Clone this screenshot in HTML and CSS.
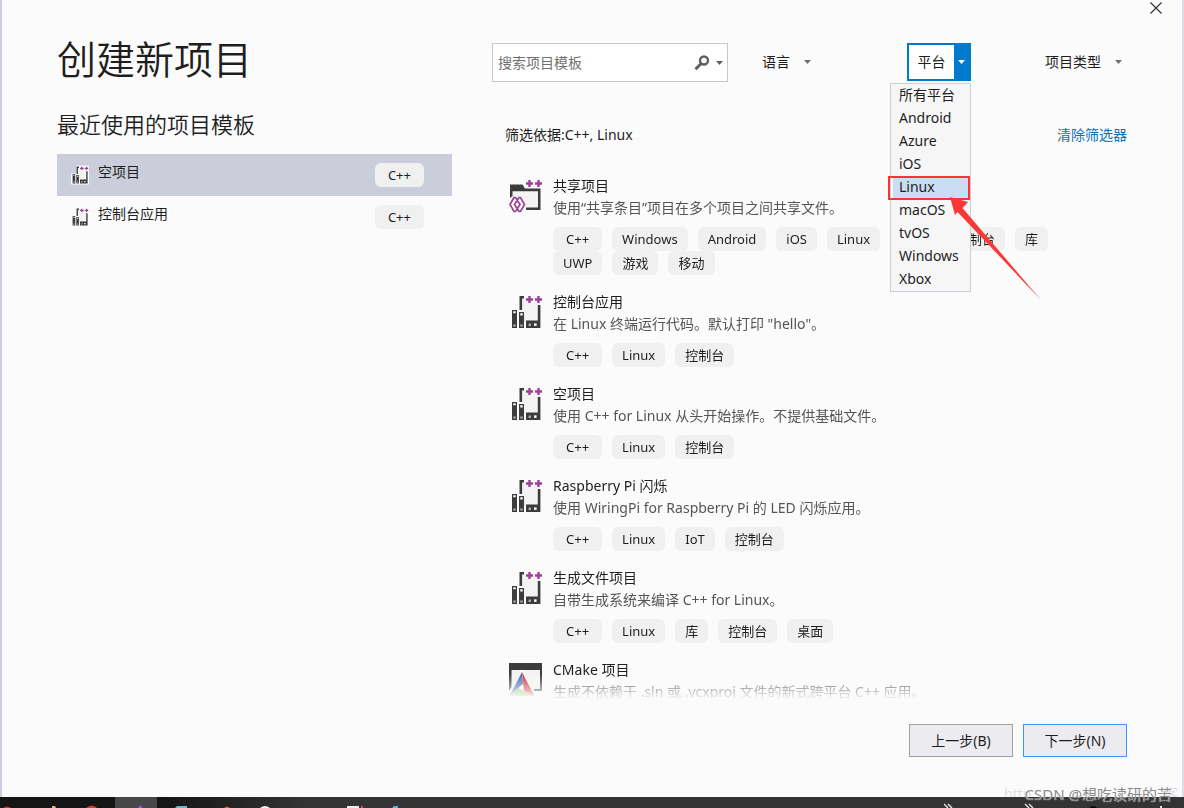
FILE: index.html
```html
<!DOCTYPE html>
<html lang="zh-CN">
<head>
<meta charset="utf-8">
<title>创建新项目</title>
<link rel="stylesheet" href="styles.css">
</head>
<body>
<svg class="sprite" aria-hidden="true">
  <symbol id="plusplus" viewBox="0 0 16 7">
    <path d="M3.500 0v7M0 3.500h7M12.500 0v7M9 3.500h7" stroke="#9b4296" stroke-width="2.400" fill="none"/>
  </symbol>
  <symbol id="linux" viewBox="0 0 34 36">
    <path d="M13 4h17v24H13z" fill="#f3f3f1"/>
    <path d="M11.800 16V3.300H15" stroke="#3c3c3c" stroke-width="2.600" fill="none"/>
    <path d="M28.800 11h2.600v23H17v-7.500h11.800z" fill="#3c3c3c"/>
    <path d="M19.500 29.500h2.500v2.500h-2.500z" fill="#aaa"/><path d="M25 29.300h2.600v2.600H25z" fill="#f5f5f5"/>
    <path d="M3 16h5v18H3zM10 18h5v16h-5z" fill="#3c3c3c"/>
    <path d="M4.200 17.300h2.600v2H4.200zM11.200 19.300h2.600v2.200h-2.600z" fill="#f5f5f5"/>
    <path d="M4.200 30.500h2.600v2H4.200zM11.200 30.500h2.600v2h-2.600z" fill="#aaa"/>
    <use href="#plusplus" x="17" y="2" width="16" height="7"/>
  </symbol>
  <symbol id="shared" viewBox="0 0 34 36">
    <path d="M3 13h27v18H3z" fill="#f3f3f1"/>
    <path d="M1 20V6.500h12.500l2.500 4h15.500V32H17v-2.400h12V13.200H3.500V18z" fill="#3c3c3c"/>
    <path d="M15.500 0H34v9.500H15.500z" fill="#fbfbfb"/>
    <path d="M5 18.500h7l5 8-5 8H5l-5-8z" fill="#fbfbfb"/>
    <path d="M5 19.500l-4 7 4 7h1.500l4.500-7-4.500-7zM10 19.500l-4.500 7 4.500 7h1.500l4-7-4-7z" fill="none" stroke="#9b4296" stroke-width="1.700"/>
    <use href="#plusplus" x="17" y="2" width="16" height="7"/>
  </symbol>
  <symbol id="cmake" viewBox="0 0 34 36">
    <path d="M2 8h30v20H2z" fill="#f3f3f1"/>
    <path d="M0 1h33v28h-8v-2h6V8H2.500v17L0 29z" fill="#3c3c3c"/>
    <path d="M13 7.500L0 34h26z" fill="#fbfbfb"/>
    <path d="M13 10L1 33 14 22z" fill="#3f72b3"/>
    <path d="M13 10l12.500 24-10.500-5z" fill="#d8333f"/>
    <path d="M1 34l8.500-8L25 34z" fill="#98c878"/>
  </symbol>
  <symbol id="caret" viewBox="0 0 7 4"><path d="M0 0h7L3.500 4z" fill="currentColor"/></symbol>
</svg>

<div class="dialog">
  <div class="titlebar">
    <button class="close" aria-label="关闭"><svg viewBox="0 0 12 12"><path d="M.5.5l11 11M11.500.5l-11 11" stroke="#333" stroke-width="1.200"/></svg></button>
  </div>
  <main class="panes">
    <section class="recent">
      <h1>创建新项目</h1>
      <h2>最近使用的项目模板</h2>
      <ul class="recent-list">
        <li class="recent-item selected"><svg class="recent-icon" viewBox="0 0 34 36"><path d="M10 0h24v36H0V15h10z" fill="#fbfbfb"/><use href="#linux"/></svg><span class="recent-name">空项目</span><span class="tag lang">C++</span></li>
        <li class="recent-item"><svg class="recent-icon" viewBox="0 0 34 36"><use href="#linux"/></svg><span class="recent-name">控制台应用</span><span class="tag lang">C++</span></li>
      </ul>
    </section>

    <section class="browse">
      <div class="toolbar">
        <div class="search">
          <input type="text" placeholder="搜索项目模板" aria-label="搜索项目模板">
          <button class="search-button" aria-label="搜索"><svg class="lens" viewBox="0 0 16 16"><circle cx="10" cy="5.500" r="4" fill="none" stroke="#5f5f5f" stroke-width="2.400"/><path d="M7.200 8.500L1.500 14.200" stroke="#5f5f5f" stroke-width="3"/></svg><svg class="caret"><use href="#caret"/></svg></button>
        </div>
        <div class="filters">
          <label class="filter language"><select aria-label="语言"><option>语言</option></select><svg class="caret"><use href="#caret"/></svg></label>
          <div class="platform">
            <button class="platform-button" aria-haspopup="listbox" aria-expanded="true"><span class="platform-label">平台</span><span class="platform-arrow"><svg class="caret"><use href="#caret"/></svg></span></button>
            <ul class="menu" role="listbox" aria-label="平台">
              <li role="option">所有平台</li>
              <li role="option">Android</li>
              <li role="option">Azure</li>
              <li role="option">iOS</li>
              <li role="option" class="active" aria-selected="true">Linux</li>
              <li role="option">macOS</li>
              <li role="option">tvOS</li>
              <li role="option">Windows</li>
              <li role="option">Xbox</li>
            </ul>
            <div class="marker"></div>
            <svg class="arrow" viewBox="0 0 94 106"><path d="M1 1l18 5-5.500 6L92 104 8.500 16 6 19z" fill="#fb3838"/></svg>
          </div>
          <label class="filter"><select class="wide" aria-label="项目类型"><option>项目类型</option></select><svg class="caret"><use href="#caret"/></svg></label>
        </div>
      </div>

      <div class="summary"><span>筛选依据:C++, Linux</span><a href="#clear">清除筛选器</a></div>

      <ul class="templates">
        <li class="template"><svg class="icon"><use href="#shared"/></svg><div class="info"><h3>共享项目</h3><p>使用“共享条目”项目在多个项目之间共享文件。</p>
          <div class="tags"><span class="tag lang">C++</span><span class="tag">Windows</span><span class="tag">Android</span><span class="tag">iOS</span><span class="tag">Linux</span><span class="tag">桌面</span><span class="tag">控制台</span><span class="tag">库</span><span class="tag">UWP</span><span class="tag">游戏</span><span class="tag">移动</span></div></div></li>
        <li class="template"><svg class="icon"><use href="#linux"/></svg><div class="info"><h3>控制台应用</h3><p>在 Linux 终端运行代码。默认打印 "hello"。</p>
          <div class="tags"><span class="tag lang">C++</span><span class="tag">Linux</span><span class="tag">控制台</span></div></div></li>
        <li class="template"><svg class="icon"><use href="#linux"/></svg><div class="info"><h3>空项目</h3><p>使用 C++ for Linux 从头开始操作。不提供基础文件。</p>
          <div class="tags"><span class="tag lang">C++</span><span class="tag">Linux</span><span class="tag">控制台</span></div></div></li>
        <li class="template"><svg class="icon"><use href="#linux"/></svg><div class="info"><h3>Raspberry Pi 闪烁</h3><p>使用 WiringPi for Raspberry Pi 的 LED 闪烁应用。</p>
          <div class="tags"><span class="tag lang">C++</span><span class="tag">Linux</span><span class="tag">IoT</span><span class="tag">控制台</span></div></div></li>
        <li class="template"><svg class="icon"><use href="#linux"/></svg><div class="info"><h3>生成文件项目</h3><p>自带生成系统来编译 C++ for Linux。</p>
          <div class="tags"><span class="tag lang">C++</span><span class="tag">Linux</span><span class="tag">库</span><span class="tag">控制台</span><span class="tag">桌面</span></div></div></li>
        <li class="template"><svg class="icon"><use href="#cmake"/></svg><div class="info"><h3>CMake 项目</h3><p>生成不依赖于 .sln 或 .vcxproj 文件的新式跨平台 C++ 应用。</p></div></li>
      </ul>
    </section>
  </main>
  <footer class="actions">
    <button>上一步(B)</button>
    <button class="primary">下一步(N)</button>
  </footer>
</div>

<div class="taskbar" aria-hidden="true">
  <svg class="taskbar-icons" viewBox="0 0 420 11">
    <path d="M115 0h42v11h-42z" fill="#474747"/>
    <path d="M3 11q4-3 8 0z" fill="#c8343c"/><path d="M52 9h3l1 2h-4z" fill="#e8b27a"/><path d="M86 11q6-5 11 0z" fill="#c74336"/>
    <path d="M138 11l2-3 3 3z" fill="#8a5bd0"/><path d="M175 11l2-2h10v2z" fill="#6cb8c8"/><path d="M224 11q3-3 6 0z" fill="#c86450"/><path d="M260 11q5-4 10 0z" fill="#eee"/>
    <path d="M347 9h12v2h-12z" fill="#eee"/><path d="M361 9h2v2h-2z" fill="#d84a60"/><path d="M392 11l2-2h4v2z" fill="#5bb4d8"/>
  </svg>
  <svg class="taskbar-tray" viewBox="0 0 240 11">
    <path d="M0 7l4 4M4 7l4 4M81 7l4 4M85 7l4 4" stroke="#ddd" stroke-width="1.500" fill="none"/>
    <path d="M145 11q4-4 8 0z" fill="#080808"/><path d="M216 9h2v2h-2z" fill="#ddd"/>
  </svg>
</div>
<div class="watermark"><span class="watermark-under"><span>http</span><span>客</span></span><span>CSDN @想吃读研的苦</span></div>
</body>
</html>
```

FILE: styles.css
```css
* { box-sizing: border-box; }
body {
  margin: 0;
  height: 100vh;
  display: flex;
  flex-direction: column;
  position: relative;
  overflow: hidden;
  background: #fbfbfb;
  color: #1e1e1e;
  font: 14px/22px "Noto Sans", "Noto Sans CJK SC", sans-serif;
}
h1, h2, h3, p, ul { margin: 0; padding: 0; font-weight: 400; }
ul { list-style: none; }
button, input, select { font: inherit; color: inherit; }
svg { display: block; flex: none; }
.sprite { position: absolute; width: 0; height: 0; }

.dialog {
  flex: 1;
  min-height: 0;
  display: flex;
  flex-direction: column;
  border-left: 2px solid #cccedb;
  border-right: 2px solid #dcdde6;
}
.titlebar { display: flex; justify-content: flex-end; height: 16px; padding: 2px 20px 2px 0; }
.close { border: 0; padding: 0; background: none; }
.close svg { width: 12px; height: 12px; }

.panes {
  flex: 1;
  min-height: 0;
  display: grid;
  grid-template-columns: 395fr 635fr;
  grid-template-rows: minmax(0, 1fr);
  gap: 40px;
  padding: 0 55px;
}
.recent { padding-top: 16px; }
h1 { font-size: 39px; line-height: 54px; font-weight: 350; }
h2 { font-size: 22px; line-height: 32px; margin: 22px 0 14px; white-space: nowrap; font-weight: 350; }
h3 { font-size: 14px; }
.recent-item { display: flex; align-items: center; height: 42px; padding: 0 28px 0 14px; }
.recent-item.selected { background: #cbcddb; }
.recent-icon { width: 18px; height: 20px; margin-right: 9px; }
.recent-name { flex: 1; padding-bottom: 6px; }
.tag {
  padding: 0 10px;
  height: 24px;
  border-radius: 6px;
  background: #f0f0f0;
  font-size: 13px;
  line-height: 24px;
  white-space: nowrap;
}
.tag.lang { padding: 0 13px; }

.browse { display: flex; flex-direction: column; padding-top: 27px; min-width: 0; }
.toolbar { display: flex; gap: 34px; height: 39px; }
.search { flex: 0 0 236px; min-width: 0; display: flex; border: 1px solid #c4c6d6; background: #fff; }
.search input { flex: 1; width: 0; min-width: 0; border: 0; padding: 0 5px; background: none; outline: 0; }
.search input::placeholder { color: #717171; opacity: 1; }
.search-button { display: flex; align-items: center; gap: 6px; border: 0; padding: 0 4px; background: none; color: #5f5f5f; }
.lens { width: 16px; height: 16px; }
.caret { width: 7px; height: 4px; }
.filters { flex: 1; display: flex; justify-content: space-between; align-items: flex-start; padding-right: 5px; }
.filter { display: flex; align-items: center; gap: 14px; height: 38px; color: #717171; }
.filter select { appearance: none; width: 28px; padding: 0; border: 0; background: none; color: #1e1e1e; }
.filter select.wide { width: 56px; }
.language { padding-right: 22px; }

.platform { position: relative; z-index: 1; }
.platform-button { display: flex; height: 38px; width: 64px; padding: 0; border: 2px solid #007acc; background: #fff; }
.platform-label { flex: 1; align-self: center; text-align: center; }
.platform-arrow { display: flex; align-items: center; justify-content: center; align-self: stretch; width: 15px; background: #007acc; color: #fff; }
.menu { position: absolute; top: 40px; right: 0; width: 81px; border: 1px solid #cccedb; background: #f6f6f6; }
.menu li { height: 23px; padding-left: 8px; line-height: 22px; }
.menu .active { margin: 0 2px; padding-left: 6px; background: #c9def5; }
.marker { position: absolute; top: 133px; right: 1px; width: 82px; height: 24px; border: 2px solid #f83434; }
.arrow { position: absolute; top: 153px; left: 42px; width: 94px; height: 106px; }

.summary { display: flex; justify-content: space-between; margin: 41px 0 28px; padding-left: 13px; line-height: 24px; }
.summary a { color: #0e70c0; text-decoration: none; }

.templates {
  flex: 1;
  min-height: 0;
  overflow: hidden;
  padding-left: 17px;
  mask-image: linear-gradient(to top, transparent, #000 26px);
}
.template { display: flex; gap: 10px; padding-bottom: 16px; }
.icon { width: 34px; height: 36px; margin-top: 3px; }
.info { flex: 1; min-width: 0; padding-right: 64px; }
.info p { color: #555; white-space: nowrap; }
.tags { display: flex; flex-wrap: wrap; column-gap: 10px; padding-top: 8px; }

.actions { display: flex; justify-content: flex-end; gap: 10px; padding: 24px 55px 40px; }
.actions button { width: 104px; height: 33px; padding: 0; border: 1px solid #a0a0a0; background: #ececf0; }
.actions .primary { border-color: #3399ff; }

.taskbar { display: flex; justify-content: space-between; height: 11px; background: linear-gradient(90deg, #151515 14%, #343434 26%); }
.taskbar-icons { width: 420px; height: 11px; }
.taskbar-tray { width: 240px; height: 11px; }
.watermark { position: absolute; right: 12px; bottom: 3px; color: #8c8c8c; font-size: 15px; text-shadow: 0 0 1px #fff; }
.watermark-under { position: absolute; right: -6px; bottom: 0; z-index: -1; width: 174px; display: flex; justify-content: space-between; color: #dedede; font-size: 14px; }
```
